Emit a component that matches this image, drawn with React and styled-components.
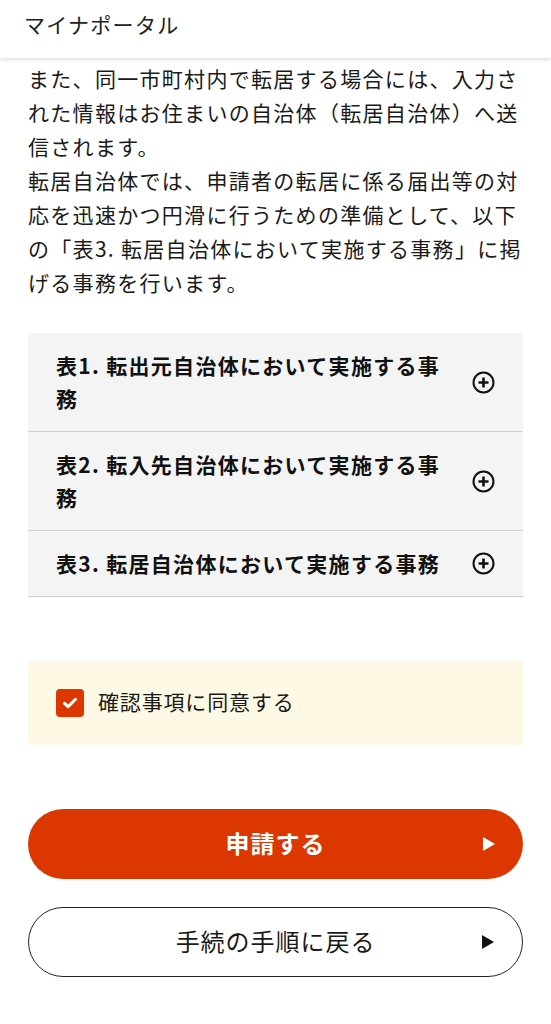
import React from "react";
import styled, { createGlobalStyle } from "styled-components";

const GlobalStyle = createGlobalStyle`
  html, body { margin: 0; padding: 0; background: #fff; }
  body {
    font-family: "Noto Sans CJK JP", "Noto Sans", sans-serif;
    color: #1a1a1a;
  }
  * { box-sizing: border-box; }
`;

const Page = styled.div`
  width: 551px;
  min-height: 1024px;
  background: #fff;
  display: flex;
  flex-direction: column;
`;

const Header = styled.header`
  height: 58px;
  padding: 7px 24px 0;
  background: #fff;
  box-shadow: 0 2px 4px rgba(0, 0, 0, 0.12);
  position: relative;
  z-index: 1;
`;

const Brand = styled.div`
  font-size: 21px;
  line-height: 34px;
  letter-spacing: 0.06em;
  color: #222;
`;

const Main = styled.main`
  padding: 3px 28px 40px;
  display: flex;
  flex-direction: column;
`;

const Paragraph = styled.p`
  margin: 0;
  font-size: 21px;
  line-height: 34px;
  letter-spacing: 0.062em;
  color: #1a1a1a;
`;

const Accordion = styled.div`
  margin-top: 34px;
  display: flex;
  flex-direction: column;
`;

const AccItem = styled.div`
  background: #f4f4f4;
  border-bottom: 1px solid #cfcfcf;
  padding: 16px 28px 16px 28px;
  display: flex;
  align-items: center;
  gap: 20px;
`;

const AccTitle = styled.div`
  flex: 1;
  font-size: 21px;
  font-weight: 700;
  line-height: 33px;
  letter-spacing: 0.062em;
  color: #111;
`;

const IconWrap = styled.span`
  width: 23px;
  height: 23px;
  display: flex;
  flex-shrink: 0;
`;

const PlusIcon = () => (
  <svg width="23" height="23" viewBox="0 0 23 23">
    <circle cx="11.5" cy="11.5" r="10" fill="none" stroke="#111" strokeWidth="2" />
    <path d="M11.5 6.5v10M6.5 11.5h10" stroke="#111" strokeWidth="2.6" strokeLinecap="butt" />
  </svg>
);

const AgreePanel = styled.label`
  margin-top: 64px;
  height: 84px;
  background: #fef9e4;
  padding: 0 28px 5px;
  display: flex;
  align-items: center;
  gap: 14px;
`;

const CheckBox = styled.span`
  width: 28px;
  height: 28px;
  border-radius: 4px;
  background: #dd3700;
  display: flex;
  align-items: center;
  justify-content: center;
  flex-shrink: 0;
  margin-top: 4px;
`;

const AgreeText = styled.span`
  font-size: 21px;
  line-height: 34px;
  letter-spacing: 0.04em;
  color: #1a1a1a;
`;

const Buttons = styled.div`
  margin-top: 64px;
  display: flex;
  flex-direction: column;
  gap: 28px;
`;

const PillButton = styled.button`
  position: relative;
  height: 70px;
  width: 100%;
  border-radius: 35px;
  border: ${(p) => (p.$primary ? "none" : "1.5px solid #222")};
  background: ${(p) => (p.$primary ? "#dd3700" : "#fff")};
  color: ${(p) => (p.$primary ? "#fff" : "#1a1a1a")};
  font-family: "Noto Sans CJK JP", "Noto Sans", sans-serif;
  font-size: 24px;
  font-weight: ${(p) => (p.$primary ? 700 : 400)};
  letter-spacing: 0.04em;
  display: flex;
  align-items: center;
  justify-content: center;
  padding: 0 0 4px;
  cursor: pointer;
`;

const Arrow = styled.span`
  position: absolute;
  right: 28px;
  top: 50%;
  transform: translateY(-50%);
  width: 0;
  height: 0;
  border-top: 7px solid transparent;
  border-bottom: 7px solid transparent;
  border-left: 12px solid ${(p) => (p.$light ? "#fff" : "#111")};
`;

const items = [
  "表1. 転出元自治体において実施する事務",
  "表2. 転入先自治体において実施する事務",
  "表3. 転居自治体において実施する事務",
];

export default function App() {
  return (
    <Page>
      <GlobalStyle />
      <Header>
        <Brand>マイナポータル</Brand>
      </Header>
      <Main>
        <Paragraph>
          また、同一市町村内で転居する場合には、入力された情報はお住まいの自治体（転居自治体）へ送信されます。
          <br />
          転居自治体では、申請者の転居に係る届出等の対応を迅速かつ円滑に行うための準備として、以下の「表3. 転居自治体において実施する事務」に掲げる事務を行います。
        </Paragraph>
        <Accordion>
          {items.map((t) => (
            <AccItem key={t}>
              <AccTitle>{t}</AccTitle>
              <IconWrap>
                <PlusIcon />
              </IconWrap>
            </AccItem>
          ))}
        </Accordion>
        <AgreePanel>
          <CheckBox>
            <svg width="18" height="18" viewBox="0 0 18 18">
              <path d="M3.5 9.3l3.6 3.4L14.5 5.3" fill="none" stroke="#fff" strokeWidth="3" strokeLinecap="round" strokeLinejoin="round" />
            </svg>
          </CheckBox>
          <AgreeText>確認事項に同意する</AgreeText>
        </AgreePanel>
        <Buttons>
          <PillButton $primary>
            申請する
            <Arrow $light />
          </PillButton>
          <PillButton>
            手続の手順に戻る
            <Arrow />
          </PillButton>
        </Buttons>
      </Main>
    </Page>
  );
}
